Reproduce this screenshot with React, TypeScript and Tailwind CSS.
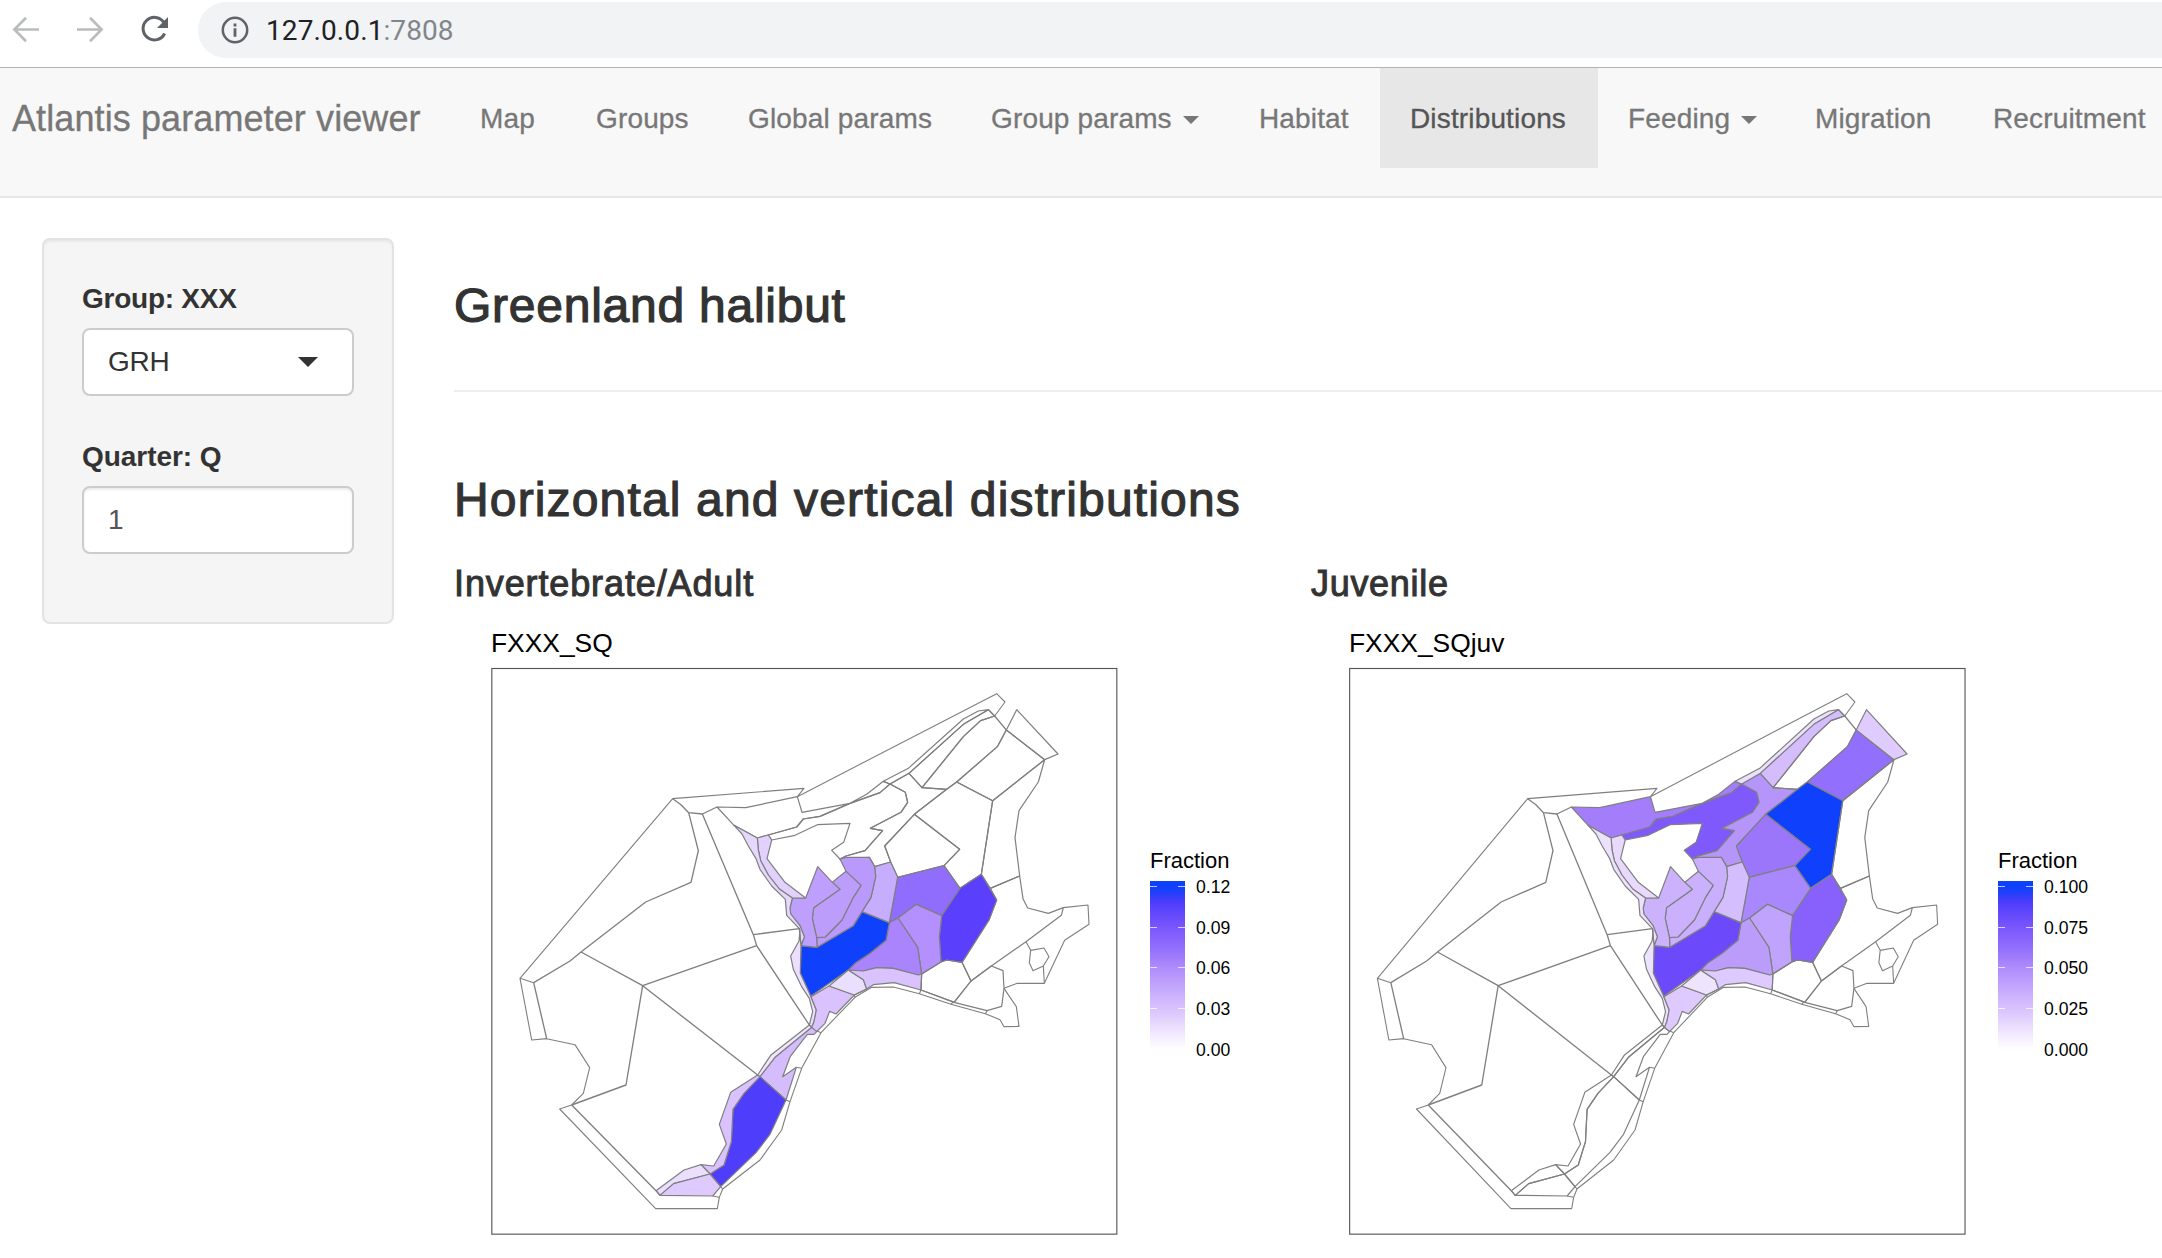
import React from "react";

type Region = { p: string; adult?: string; juv?: string };

/* Model boxes of the domain. Fills are the fraction of biomass in each box. */
const regions: Region[] = [
  { p: "711,441 797,443 952,410 966,457 1110,430 1160,403 1210,364 1230,372 1200,398 1110,430 1020,469 970,477 950,501 865,525 832,534 762,496", juv: "#a47dfb" },
  { p: "865,525 950,501 970,477 1020,469 1110,430 1200,398 1230,372 1276,397 1283,427 1263,457 1171,505 1208,512 1155,572 1098,588 1080,597 1055,571 1091,547 1110,490 1012,494 945,526 875,540", juv: "#8059fc" },
  { p: "1230,372 1287,340 1326,383 1400,388 1303,463 1214,558 1232,606 1184,620 1168,592 1080,597 1098,588 1155,572 1208,512 1171,505 1263,457 1283,427 1276,397", juv: "#b695fb" },
  { p: "1210,364 1285,325 1450,177 1495,153 1525,149 1450,193 1287,340 1230,372", juv: "#ece1fd" },
  { p: "1287,340 1450,193 1525,149 1544,168 1502,182 1450,230 1326,383", juv: "#d5bdfd" },
  { p: "1326,383 1450,230 1502,182 1544,168 1579,210 1552,260 1430,366 1400,388" },
  { p: "1579,210 1694,299 1538,422 1430,366 1552,260", juv: "#936ffd" },
  { p: "1579,210 1610,149 1734,282 1694,299", juv: "#dfcbfd" },
  { p: "1303,463 1400,388 1430,366 1538,422 1504,643 1440,685 1392,617 1439,568", juv: "#0f40fc" },
  { p: "1303,463 1439,568 1392,617 1253,652 1232,606 1214,558", juv: "#9b76fb" },
  { p: "1694,299 1675,366 1617,452 1605,533 1619,648 1531,685 1504,643 1538,422" },
  { p: "1619,648 1629,716 1643,744 1705,760 1750,743 1744,766 1638,845 1534,918 1473,963 1446,907 1527,780 1550,720 1531,685" },
  { p: "1504,643 1550,720 1527,780 1446,907 1400,900 1383,906 1378,830 1385,767 1440,685", adult: "#5a3ffd", juv: "#8861fd" },
  { p: "1253,652 1392,617 1440,685 1385,767 1309,733 1254,774 1228,788", adult: "#906dfd", juv: "#a987fc" },
  { p: "1309,733 1385,767 1378,830 1383,906 1325,942 1313,862 1254,774", adult: "#b390fd", juv: "#c0a3fc" },
  { p: "1228,788 1254,774 1313,862 1325,942 1315,945 1240,925 1190,923 1150,933 1105,930 1125,910 1170,880 1218,841", adult: "#a984fc", juv: "#bc9cfb" },
  { p: "1146,755 1228,788 1218,841 1170,880 1125,910 1105,930 992,1009 961,940 963,857 1011,862 1120,797", adult: "#0f40fc", juv: "#6c4afb" },
  { p: "1184,620 1232,606 1253,652 1228,788 1146,755 1173,712 1187,650", adult: "#c7adfd", juv: "#d5befd" },
  { p: "1080,597 1098,592 1168,592 1184,620 1187,650 1173,712 1146,755 1120,797 1011,862 1010,833 1036,831 1086,780 1120,712 1143,676 1098,634", adult: "#ba99fc", juv: "#c9affd" },
  { p: "1057,667 1098,634 1143,676 1120,712 1086,780 1036,831 1010,833 997,775 1001,743 1080,688", adult: "#bd9dfc", juv: "#cab0fd" },
  { p: "977,714 1013,620 1057,667 1080,688 1001,743 997,775 1010,833 1011,862 963,857 973,830 960,797 932,762 930,744 937,714", adult: "#bf9ffd", juv: "#ccb2fd" },
  { p: "832,534 865,525 875,540 861,596 915,667 977,714 937,714 898,687 865,645 842,602 835,570", adult: "#e2d1fd", juv: "#e9dafd" },
  { p: "762,496 832,534 835,570 842,602 865,645 898,687 937,714 930,744 932,762 960,797 973,830 963,857 958,806 920,766 916,718 875,678 840,628 828,596 805,558 786,522", adult: "#e6d7fd", juv: "#ede2fe" },
  { p: "958,806 960,812 957,843 932,888 940,928 965,980 988,1015 998,1055 988,1095 995,1102 1002,1085 1009,1050 993,1010 961,940 963,857", adult: "#ebdffd", juv: "#ede3fe" },
  { p: "993,1010 1047,978 1123,1005 1068,1062 1049,1054 1035,1090 1010,1115 995,1102 1002,1085 1009,1050", adult: "#d9c2fd", juv: "#decafe" },
  { p: "1047,978 1105,930 1150,959 1160,987 1123,1005", adult: "#ebdffe", juv: "#eee4fe" },
  { p: "1105,930 1150,933 1190,923 1240,925 1315,945 1325,942 1323,990 1242,968 1180,974 1160,987 1150,959", adult: "#d9c2fd", juv: "#decafe" },
  { p: "995,1102 1010,1115 1002,1123 982,1123 931,1189 908,1250 949,1222 918,1320 840,1250 885,1192", adult: "#d5bcfd" },
  { p: "988,1095 995,1102 885,1192 840,1250 833,1245 872,1186", adult: "#efe6fe" },
  { p: "840,1250 918,1320 870,1423 828,1478 722,1580 690,1542 732,1515 754,1445 759,1348 792,1300", adult: "#4f3dfc" },
  { p: "833,1245 840,1250 792,1300 759,1348 754,1445 732,1515 690,1542 663,1514 701,1518 739,1452 718,1393 752,1297", adult: "#d9c2fd" },
  { p: "663,1514 690,1542 581,1571 540,1606 528,1592 612,1530", adult: "#ebdffd" },
  { p: "690,1542 722,1580 698,1608 540,1606 581,1571", adult: "#decafd" },
  { p: "1323,990 1325,942 1383,906 1400,900 1446,907 1473,963 1422,1027" },
  { p: "1473,963 1534,918 1569,932 1572,985 1565,1039 1521,1052 1422,1027" },
];

/* Divisions shared by two open-ocean boxes. */
const divisions: string[] = [
  "578,416 603,434 626,458 667,462 711,441",
  "626,458 655,572 633,667 497,726 303,876 270,903 161,968 200,1136",
  "667,462 820,824 830,857 988,1095",
  "820,824 958,806",
  "303,876 488,977 830,857",
  "488,977 833,1245",
  "488,977 438,1275 275,1335",
  "275,1335 528,1592 540,1606",
];

/* Outer edges of the domain. */
const edges: string[] = [
  "120,955 578,416 972,385 952,410 1550,101 1575,126 1544,168 1525,149",
  "161,968 120,955 155,1140 200,1136 285,1154 329,1223 310,1300 275,1335",
  "275,1335 239,1347 527,1646 712,1646 718,1612 728,1587 840,1500 905,1410 930,1325 965,1225 1023,1118 1125,1012 1175,982 1240,981 1318,1001 1413,1033 1516,1061 1560,1079 1572,1100 1617,1099 1609,1040 1572,985",
  "698,1608 718,1612",
  "722,1580 728,1587",
  "918,1320 930,1325",
  "949,1222 965,1225",
  "1010,1112 1023,1118",
  "1123,1005 1125,1012",
  "1123,1005 1160,987",
  "1323,990 1318,1001",
  "1323,990 1420,1025 1413,1033",
  "1521,1052 1516,1061",
  "1750,743 1824,735 1827,793 1754,841 1693,970 1612,970 1572,985",
  "1638,845 1652,871 1692,864 1707,890 1690,918 1659,932 1648,908 1652,871",
  "1690,918 1693,970",
];

function DomainMap({ kind }: { kind: "adult" | "juv" }) {
  return (
    <svg
      viewBox="0 0 1950 1749"
      preserveAspectRatio="none"
      className={kind === "adult" ? "h-[583px] w-[650px] shrink-0" : "h-[583px] w-[640px] shrink-0"}
    >
      <g stroke="#7f7f7f" strokeLinejoin="round" fill="none">
        {regions.map((r, i) => (
          <polygon key={i} points={r.p} fill={r[kind] ?? "none"} strokeWidth={3.6} />
        ))}
        {divisions.map((l, i) => (
          <polyline key={i} points={l} strokeWidth={4} />
        ))}
        {edges.map((l, i) => (
          <polyline key={i} points={l} strokeWidth={3.3} />
        ))}
      </g>
      <rect x="35.5" y="25.5" width="1875" height="1697" fill="none" stroke="#555" strokeWidth="3.4" />
    </svg>
  );
}

function Legend({ labels }: { labels: string[] }) {
  return (
    <div className="text-black">
      <div className="h-[33px] text-[22px] leading-[25px]">Fraction</div>
      <div className="flex">
        <div className="flex h-[168px] w-[35px] flex-col gap-[39.6px] bg-[linear-gradient(to_bottom,#0f40fc_0%,#0f40fc_4%,#4f3dfb_13%,#7452fc_25%,#936ffd_40%,#b08cfc_52%,#cab0fd_67%,#dfcbfd_80%,#f3ecfe_92%,#ffffff_100%)] pt-[5px]">
          {labels.map((l) => (
            <div key={l} className="flex h-px w-full justify-between">
              <span className="h-px w-[7px] bg-white/70" />
              <span className="h-px w-[7px] bg-white/70" />
            </div>
          ))}
        </div>
        <div className="ml-[11px] mt-[-4px] flex flex-col gap-[20.7px] text-[17.6px] leading-[20px]">
          {labels.map((l) => (
            <span key={l}>{l}</span>
          ))}
        </div>
      </div>
    </div>
  );
}

function Caret({ className = "" }: { className?: string }) {
  return (
    <span
      className={
        "inline-block h-0 w-0 border-x-[8px] border-t-[8px] border-x-transparent border-t-current " + className
      }
    />
  );
}

const tabs: { name: string; w: string; caret?: boolean; active?: boolean }[] = [
  { name: "Map", w: "w-[116px]" },
  { name: "Groups", w: "w-[152px]" },
  { name: "Global params", w: "w-[243px]" },
  { name: "Group params", w: "w-[268px]", caret: true },
  { name: "Habitat", w: "w-[151px]" },
  { name: "Distributions", w: "w-[218px]", active: true },
  { name: "Feeding", w: "w-[187px]", caret: true },
  { name: "Migration", w: "w-[178px]" },
  { name: "Recruitment", w: "w-[212px]" },
];

export default function App() {
  return (
    <div className="h-[1258px] w-[2162px] overflow-hidden bg-white font-['Liberation_Sans',Arial,sans-serif] text-[#333]">
      <div className="flex h-[68px] items-start border-b border-[#b1b4b7] pt-[2px]">
        <svg viewBox="0 0 198 56" className="h-[56px] w-[198px] shrink-0" fill="none">
          <g stroke="#babcbe" strokeWidth="2.7">
            <path d="M39 27.5H15M26 15.8L14.4 27.5L26 39.2" />
            <path d="M77 27.5H101M90 15.8L101.6 27.5L90 39.2" />
          </g>
          <path d="M163.8 20.4A11.3 11.3 0 1 0 164.6 31.5" stroke="#5f6368" strokeWidth="3" />
          <path d="M168 15V26H157Z" fill="#5f6368" />
        </svg>
        <div className="flex h-[56px] flex-1 items-center rounded-l-full bg-[#f1f3f4] pl-[23px]">
          <svg viewBox="0 0 28 28" className="h-[28px] w-[28px]" fill="none">
            <circle cx="14" cy="14" r="12.2" stroke="#5f6368" strokeWidth="2.5" />
            <path d="M14 12.3V20.7M14 7.6V10.4" stroke="#5f6368" strokeWidth="2.8" />
          </svg>
          <div className="ml-[17px] pt-[2px] font-[Roboto,sans-serif] text-[28px] leading-[54px] tracking-[0.1px] text-[#202124]">
            127.0.0.1<span className="text-[#80868b]">:7808</span>
          </div>
        </div>
      </div>

      <nav className="flex h-[130px] border-b-2 border-[#e7e7e7] bg-[#f8f8f8] text-[#777]">
        <div className="w-[450px] shrink-0 whitespace-nowrap pl-[12px] text-[36px] leading-[101px] tracking-[0.1px] [-webkit-text-stroke:0.3px_#777]">
          Atlantis parameter viewer
        </div>
        {tabs.map((t) => (
          <div
            key={t.name}
            className={
              "flex h-[100px] shrink-0 items-center whitespace-nowrap pl-[30px] pt-[2px] text-[28px] tracking-[0.15px] [-webkit-text-stroke:0.3px_currentColor] " +
              t.w +
              (t.active ? " bg-[#e7e7e7] text-[#555]" : "")
            }
          >
            {t.name}
            {t.caret && <Caret className="ml-[11px] mt-[2px]" />}
          </div>
        ))}
      </nav>

      <div className="flex pt-[40px]">
        <aside className="ml-[42px] h-[386px] w-[352px] shrink-0 rounded-[8px] border-2 border-[#e3e3e3] bg-[#f5f5f5] px-[38px] pt-[38px] shadow-[inset_0_2px_2px_rgba(0,0,0,0.05)]">
          <div className="h-[50px] pt-px text-[28px] font-bold leading-[40px] tracking-[-0.25px]">Group: XXX</div>
          <div className="flex h-[68px] items-center justify-between rounded-[8px] border-2 border-[#ccc] bg-white pl-[24px] pr-[34px] text-[28px] tracking-[-0.3px]">
            GRH
            <span className="inline-block h-0 w-0 border-x-[10px] border-t-[10px] border-x-transparent border-t-[#333]" />
          </div>
          <div className="mt-[40px] h-[50px] pt-px text-[28px] font-bold leading-[40px] tracking-[-0.05px]">Quarter: Q</div>
          <div className="flex h-[68px] items-center rounded-[8px] border-2 border-[#ccc] bg-white pl-[24px] text-[28px] text-[#555] shadow-[inset_0_2px_2px_rgba(0,0,0,0.075)]">
            1
          </div>
        </aside>

        <main className="ml-[60px] flex-1">
          <h2 className="mt-[40px] h-[112px] pt-px text-[48px] leading-[53px] tracking-[0.75px] [-webkit-text-stroke:1.2px_#333]">
            Greenland halibut
          </h2>
          <hr className="border-t-2 border-[#eee]" />
          <h2 className="mt-[80px] h-[84px] pt-px text-[48px] leading-[53px] tracking-[1.15px] [-webkit-text-stroke:1.2px_#333]">
            Horizontal and vertical distributions
          </h2>
          <div className="flex">
            <section className="w-[857px] shrink-0">
              <h3 className="mt-[7px] h-[64px] pt-px text-[36px] leading-[40px] tracking-[0.88px] [-webkit-text-stroke:1px_#333]">
                Invertebrate/Adult
              </h3>
              <div className="h-[33px] pl-[37px] pt-px text-[26.4px] leading-[30px] text-black">FXXX_SQ</div>
              <div className="flex pl-[26px]">
                <DomainMap kind="adult" />
                <div className="ml-[20px] mt-[188px]">
                  <Legend labels={["0.12", "0.09", "0.06", "0.03", "0.00"]} />
                </div>
              </div>
            </section>
            <section className="w-[851px] shrink-0">
              <h3 className="mt-[7px] h-[64px] pt-px text-[36px] leading-[40px] tracking-[0.7px] [-webkit-text-stroke:1px_#333]">
                Juvenile
              </h3>
              <div className="h-[33px] pl-[38px] pt-px text-[26.4px] leading-[30px] text-black">FXXX_SQjuv</div>
              <div className="flex pl-[27px]">
                <DomainMap kind="juv" />
                <div className="ml-[20px] mt-[188px]">
                  <Legend labels={["0.100", "0.075", "0.050", "0.025", "0.000"]} />
                </div>
              </div>
            </section>
          </div>
        </main>
      </div>
    </div>
  );
}
